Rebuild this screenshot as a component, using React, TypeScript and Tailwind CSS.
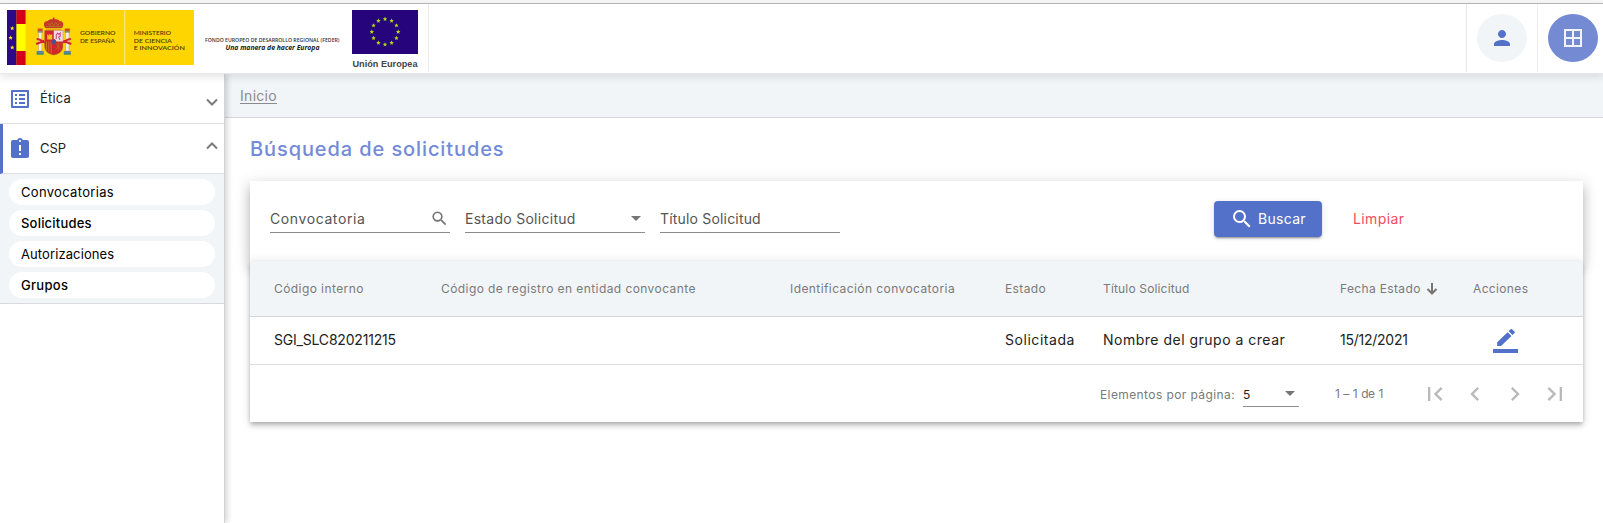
import React from "react";
import {
  MdListAlt,
  MdAssignmentLate,
  MdPerson,
  MdBorderAll,
  MdSearch,
  MdFirstPage,
  MdChevronLeft,
  MdChevronRight,
  MdLastPage,
} from "react-icons/md";

const starPoints = Array.from({ length: 12 }, (_, i) => {
  const a = (i * Math.PI) / 6;
  return { x: 33 + 13.2 * Math.sin(a), y: 21.7 - 12.7 * Math.cos(a) };
});

function GovernmentLogo() {
  return (
    <svg width="187" height="55" viewBox="0 0 186 55" preserveAspectRatio="none" className="shrink-0">
      <rect width="186" height="55" fill="#ffd500" />
      <rect width="9.5" height="55" fill="#2c0a86" />
      <g fill="#ffe21a">
        <path d="M5.2 16l.6 1.5 1.6.1-1.2 1 .4 1.6-1.4-.9-1.4.9.4-1.6-1.2-1 1.6-.1z" />
        <path d="M3.6 25.5l.6 1.5 1.6.1-1.2 1 .4 1.6-1.4-.9-1.4.9.4-1.6-1.2-1 1.6-.1z" />
        <path d="M5.2 35.2l.6 1.5 1.6.1-1.2 1 .4 1.6-1.4-.9-1.4.9.4-1.6-1.2-1 1.6-.1z" />
      </g>
      <rect x="9.5" width="9" height="14" fill="#d2001a" />
      <rect x="9.5" y="14" width="9" height="27" fill="#ffff00" />
      <rect x="9.5" y="41" width="9" height="14" fill="#d2001a" />
      <rect x="116.5" width="1" height="55" fill="#ffe98a" />
      {/* crown */}
      <path d="M38 18c-2.500-4-1-7 2.500-7 1-1.500 3-2 5-1.800V7.600h1.800v1.600c2-.2 4 .3 5 1.800 3.500 0 5 3 2.500 7z" fill="#c8352b" />
      <path d="M38.500 16.500h15.800M40.500 13l2 2.500 2-3 2 3 2-3 2 3 2-2.500" stroke="#a87a1c" strokeWidth=".9" fill="none" />
      <path d="M39 18.500h15v1.500H39z" fill="#e2a21a" />
      {/* pillars */}
      <path d="M31.300 22h3.400v19h-3.400zM58.300 22h3.400v19h-3.400z" fill="#f5efe4" stroke="#a98b55" strokeWidth=".4" />
      <path d="M30.500 18.500h5v2.700h-5zM57.500 18.500h5v2.700h-5z" fill="#d24a2a" />
      <path d="M30.300 21.200h5.400v1.300h-5.400zM57.300 21.200h5.400v1.300h-5.400z" fill="#6f7f9c" />
      <path d="M29.500 29c3 0 5 1.500 9 4M63.500 29c-3 0-5 1.500-9 4M29 34l8-3M64 34l-8-3" stroke="#d3262b" strokeWidth="2" fill="none" />
      <path d="M29.500 41h7v3h-7zM56.500 41h7v3h-7z" fill="#5d83a0" />
      <path d="M29.500 43.500h7v1.300h-7zM56.500 43.500h7v1.300h-7z" fill="#3f9158" />
      {/* quartered shield */}
      <path d="M37.500 20.500h18v16c0 5-4 7.500-9 8.500-5-1-9-3.500-9-8.500z" fill="#d3262b" stroke="#a56a20" strokeWidth=".5" />
      <path d="M46.500 20.500h9v11h-9z" fill="#f3dce2" />
      <path d="M49 29v-4l1.500-2 1 1.500 1.500-1.500v3l-1.500 1 1 3" stroke="#c2447a" strokeWidth="1" fill="none" />
      <path d="M40 29.500v-5h1v1h1v-1.500h1V25h1v-.500h1v5z" fill="#f2c21c" />
      <path d="M39.300 31.500v9M41.600 31.500v10.500M43.900 31.500v12" stroke="#c98a1e" strokeWidth=".8" />
      <path d="M48 33l6 7M54 33l-6 7M51 32v9" stroke="#bf6c22" strokeWidth=".7" />
      <ellipse cx="46.500" cy="32" rx="2.200" ry="2.700" fill="#3159a5" stroke="#d3262b" strokeWidth=".8" />
      <g fill="#4a3d00" fontFamily="Lato, sans-serif" fontSize="6.400" fontWeight="600">
        <text x="72.500" y="25.500" textLength="35.500" lengthAdjust="spacingAndGlyphs">GOBIERNO</text>
        <text x="72.500" y="32.700" textLength="35" lengthAdjust="spacingAndGlyphs">DE ESPAÑA</text>
        <text x="126" y="25.500" textLength="37" lengthAdjust="spacingAndGlyphs">MINISTERIO</text>
        <text x="126" y="32.700" textLength="38" lengthAdjust="spacingAndGlyphs">DE CIENCIA</text>
        <text x="126" y="39.900" textLength="51" lengthAdjust="spacingAndGlyphs">E INNOVACIÓN</text>
      </g>
    </svg>
  );
}

function FundLogo() {
  return (
    <svg width="138" height="24" viewBox="0 0 138 24" className="mt-[28px] ml-[10px] shrink-0 overflow-visible" fontFamily="Open Sans, Noto Sans, sans-serif">
      <text x="1" y="10" fontSize="6" fill="#333" fontWeight="600" textLength="134.500" lengthAdjust="spacingAndGlyphs">
        FONDO EUROPEO DE DESARROLLO REGIONAL (FEDER)
      </text>
      <text x="21.500" y="18.300" fontSize="7.300" fill="#1c1c1c" fontWeight="700" fontStyle="italic" textLength="94" lengthAdjust="spacingAndGlyphs">
        Una manera de hacer Europa
      </text>
    </svg>
  );
}

function EuropeLogo() {
  return (
    <svg width="68" height="62" viewBox="0 0 68 62" className="mt-[6px] ml-[10px] shrink-0 overflow-visible">
      <rect width="66" height="44" fill="#26047c" />
      {starPoints.map((p, i) => (
        <path
          key={i}
          transform={`translate(${p.x} ${p.y})`}
          d="M0-2.200L.7-.7 2.200-.6 1 .5 1.400 2 0 1.200-1.400 2-1 .5-2.200-.6-.7-.7z"
          fill="#b4dc14"
        />
      ))}
      <text x="0.500" y="56.500" fontFamily="Liberation Sans, Arial, sans-serif" fontWeight="700" fontSize="9.800" fill="#444" textLength="65" lengthAdjust="spacingAndGlyphs">
        Unión Europea
      </text>
    </svg>
  );
}

function Header() {
  return (
    <header className="relative z-20 flex h-[70px] shrink-0 border-b border-[#e6e7ea] bg-white shadow-[0_3px_8px_rgba(0,0,0,0.1)]">
      <div className="flex h-[68px] w-[429px] border-r border-[#ececf0] pl-[7px]">
        <div className="pt-[6px]">
          <GovernmentLogo />
        </div>
        <FundLogo />
        <EuropeLogo />
      </div>
      <div className="ml-auto flex h-[68px]">
        <div className="flex w-[71px] border-l border-[#e8e8ec] pt-[10px] pl-[10px]">
          <button className="flex h-12 w-[50px] items-center justify-center rounded-[50%] bg-[#f1f5f8] text-[#5471ca]">
            <MdPerson size={24} />
          </button>
        </div>
        <div className="flex w-[66px] border-l border-[#f1f1f4] pt-[10px] pl-[10px]">
          <button className="flex h-12 w-[50px] items-center justify-center rounded-[50%] bg-[#748ad2] text-[#f1f5f8]">
            <MdBorderAll size={24} />
          </button>
        </div>
      </div>
    </header>
  );
}

function Caret({ up = false }: { up?: boolean }) {
  return (
    <svg width="12" height="8" viewBox="0 0 12 8" fill="none" stroke="#7b7b7b" strokeWidth="2">
      <path d={up ? "M1 6.500L6 1.500l5 5" : "M1 1.500l5 5 5-5"} />
    </svg>
  );
}

const subItems = [
  { label: "Convocatorias", cls: "font-normal tracking-[0.32px]" },
  { label: "Solicitudes", cls: "font-medium tracking-[0.2px]" },
  { label: "Autorizaciones", cls: "font-normal tracking-[0.1px]" },
  { label: "Grupos", cls: "font-medium tracking-[0.3px]" },
];

function Sidebar() {
  return (
    <aside className="relative z-10 w-[225px] shrink-0 border-r border-[#d3d3d5] bg-white shadow-[2px_0_6px_rgba(0,0,0,0.18)]">
      <div className="flex h-[50px] items-center border-b border-[#dedfe1] pr-[6px] pl-2">
        <MdListAlt size={24} className="text-[#5471ca]" />
        <span className="ml-2 text-[13px] tracking-[0.2px] text-[#222]">Ética</span>
        <span className="mt-[6px] ml-auto">
          <Caret />
        </span>
      </div>
      <div className="flex h-[50px] items-center border-b border-l-[3px] border-b-[#dedfe1] border-l-[#5471ca] pr-[6px] pl-[5px]">
        <MdAssignmentLate size={24} className="text-[#5471ca]" />
        <span className="ml-2 text-[13px] text-[#222]">CSP</span>
        <span className="mb-[6px] ml-auto">
          <Caret up />
        </span>
      </div>
      <ul className="flex h-[130px] flex-col gap-[5px] border-b border-[#d9dadd] bg-[#f1f5f8] pt-[5px] pr-[9px] pl-[9px]">
        {subItems.map((s) => (
          <li key={s.label} className="flex h-[26px] items-center rounded-full bg-white pt-[2px] pl-3 text-[13px] text-black">
            <span className={s.cls}>{s.label}</span>
          </li>
        ))}
      </ul>
    </aside>
  );
}

function Triangle() {
  return (
    <svg width="10" height="5" viewBox="0 0 10 5" fill="#757575" className="shrink-0">
      <path d="M0 0h10L5 5z" />
    </svg>
  );
}

function SearchPanel() {
  return (
    <section className="flex h-20 bg-white pl-5 shadow-[0_5px_5px_-3px_rgba(0,0,0,0.2),0_8px_10px_1px_rgba(0,0,0,0.14),0_3px_14px_2px_rgba(0,0,0,0.12)]">
      <div className="flex gap-[15px] pt-[24px] text-[14px] text-[#545454]">
        <div className="flex h-[28px] w-[180px] items-center justify-between border-b border-[#8c8c8c] pr-[1px] pb-px">
          <span className="tracking-[0.6px]">Convocatoria</span>
          <MdSearch size={19} className="text-[#757575]" />
        </div>
        <div className="flex h-[28px] w-[180px] items-center justify-between border-b border-[#8c8c8c] pr-1 pb-px">
          <span className="tracking-[0.28px]">Estado Solicitud</span>
          <Triangle />
        </div>
        <div className="flex h-[28px] w-[180px] items-center border-b border-[#8c8c8c] pb-px">
          <span className="tracking-[0.18px]">Título Solicitud</span>
        </div>
      </div>
      <div className="ml-[374px] flex items-start pt-5 text-[14px]">
        <button className="flex h-9 w-[108px] items-center rounded bg-[#5471ca] pl-4 text-white shadow-[0_3px_1px_-2px_rgba(0,0,0,0.2),0_2px_2px_rgba(0,0,0,0.14),0_1px_5px_rgba(0,0,0,0.12)]">
          <MdSearch size={24} />
          <span className="ml-1 pb-[2px] tracking-[0.3px]">Buscar</span>
        </button>
        <button className="ml-[31px] h-9 pb-[2px] tracking-[0.4px] text-[#f04e5e]">Limpiar</button>
      </div>
    </section>
  );
}

function ResultsTable() {
  return (
    <table className="w-[1333px] table-fixed border-separate border-spacing-0 text-left">
      <colgroup>
        <col className="w-[191px]" />
        <col className="w-[349px]" />
        <col className="w-[215px]" />
        <col className="w-[98px]" />
        <col className="w-[237px]" />
        <col className="w-[133px]" />
        <col className="w-[110px]" />
      </colgroup>
      <thead>
        <tr className="h-14 bg-[#f1f5f8] text-[12px] whitespace-nowrap text-[#7a7a7a] [&>th]:border-b [&>th]:border-[#d3d6da] [&>th]:py-0">
          <th className="pl-6 font-normal tracking-[0.42px]">Código interno</th>
          <th className="font-normal tracking-[0.42px]">Código de registro en entidad convocante</th>
          <th className="font-normal tracking-[0.42px]">Identificación convocatoria</th>
          <th className="font-normal tracking-[0.4px]">Estado</th>
          <th className="font-normal tracking-[0.16px]">Título Solicitud</th>
          <th className="font-normal">
            <span className="flex items-center">
              <span className="tracking-[0.35px]">Fecha Estado</span>
              <svg width="12" height="12" viewBox="0 0 12 12" className="ml-[5px]" fill="none" stroke="#757575" strokeWidth="2">
                <path d="M6 0v10M1.500 6L6 10.500 10.500 6" />
              </svg>
            </span>
          </th>
          <th className="font-normal tracking-[0.35px]">Acciones</th>
        </tr>
      </thead>
      <tbody>
        <tr className="h-12 text-[14px] whitespace-nowrap text-[#222] [&>td]:border-b [&>td]:border-[#dedede] [&>td]:pt-0 [&>td]:pb-[2px]">
          <td className="pl-6 tracking-[-0.2px]">SGI_SLC820211215</td>
          <td />
          <td />
          <td className="tracking-[0.55px]">Solicitada</td>
          <td className="tracking-[0.5px]">Nombre del grupo a crear</td>
          <td className="tracking-[-0.25px]">15/12/2021</td>
          <td className="pl-5">
            <svg width="25" height="24" viewBox="0 0 24 24" preserveAspectRatio="none" fill="#5471ca" className="mt-[2px]">
              <path d="M17.750 7L14 3.250l-10 10V17h3.750l10-10zm2.960-2.960c.39-.39.39-1.020 0-1.410L18.370.29c-.39-.39-1.020-.39-1.410 0L15 2.250 18.750 6l1.960-1.960z" />
              <path d="M0 20h24v4H0z" />
            </svg>
          </td>
        </tr>
      </tbody>
    </table>
  );
}

function Paginator() {
  return (
    <div className="flex h-[57px] items-center text-[12px] text-[#7a7a7a]">
      <span className="ml-[850px] w-[143px] pt-[2px] tracking-[0.4px]">Elementos por página:</span>
      <div className="flex h-[26px] w-14 items-center justify-between border-b border-[#8c8c8c] pr-1 text-[#222]">
        <span className="pt-[3px]">5</span>
        <Triangle />
      </div>
      <span className="ml-9 w-[86px] tracking-[-0.5px] [word-spacing:1.1px]">1 – 1 de 1</span>
      <div className="flex gap-[12px] text-[#b9b9b9]">
        <MdFirstPage size={28} />
        <MdChevronLeft size={28} />
        <MdChevronRight size={28} />
        <MdLastPage size={28} />
      </div>
    </div>
  );
}

export default function App() {
  return (
    <div className="flex h-[523px] w-[1603px] flex-col overflow-hidden bg-white font-['Inter','Liberation_Sans',sans-serif]">
      <div className="h-1 shrink-0 border-b border-[#b8b8b8] bg-[#f6f6f6]" />
      <Header />
      <div className="flex flex-1">
        <Sidebar />
        <main className="flex-1">
          <nav className="flex h-11 items-center border-b border-[#d3d6da] bg-[#f1f5f8] pl-[15px]">
            <a className="text-[14px] tracking-[0.3px] text-[#8b8b8b] underline underline-offset-2">Inicio</a>
          </nav>
          <div className="pl-[25px]">
            <h1 className="flex h-[63px] items-center pb-[2px] text-[20px] font-medium tracking-[0.9px] text-[#748ad8]">
              Búsqueda de solicitudes
            </h1>
            <div className="w-[1333px]">
              <SearchPanel />
              <section className="relative h-[161px] bg-white shadow-[0_2px_4px_-1px_rgba(0,0,0,0.2),0_4px_5px_rgba(0,0,0,0.14),0_1px_10px_rgba(0,0,0,0.12)]">
                <ResultsTable />
                <Paginator />
              </section>
            </div>
          </div>
        </main>
      </div>
    </div>
  );
}
